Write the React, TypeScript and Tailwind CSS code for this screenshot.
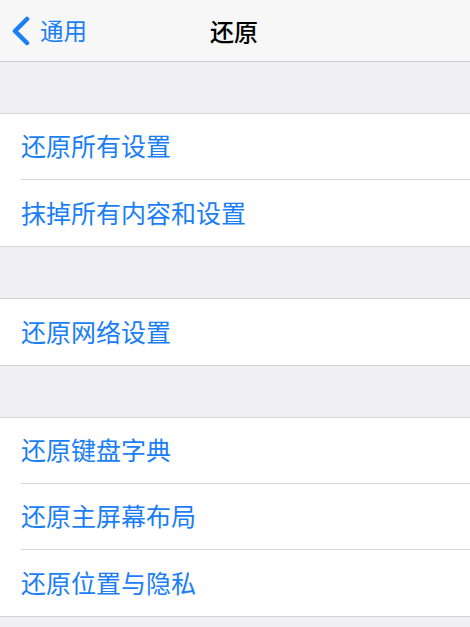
import React from 'react';

const groups: string[][] = [
  ['还原所有设置', '抹掉所有内容和设置'],
  ['还原网络设置'],
  ['还原键盘字典', '还原主屏幕布局', '还原位置与隐私'],
];

const font = { fontFamily: '"Noto Sans CJK SC", "Noto Sans", sans-serif' };

export default function App() {
  return (
    <div className="min-h-[627px] w-[470px] bg-[#efeff4]" style={font}>
      <header className="relative flex h-[62px] items-center border-b border-[#cdcdd1] bg-[#f7f7f8]">
        <button className="flex items-center pl-[9px] text-[#1a7ef5]">
          <svg width="22" height="30" viewBox="0 0 22 30" fill="none">
            <path d="M18 3 L6 15 L18 27" stroke="currentColor" strokeWidth="4.5" strokeLinecap="round" strokeLinejoin="round" />
          </svg>
          <span className="ml-[9px] text-[23.5px] leading-none">通用</span>
        </button>
        <h1 className="absolute left-[210px] text-[24px] font-medium leading-none text-black">还原</h1>
      </header>

      {groups.map((rows, gi) => (
        <section key={gi} className="pt-[51px]">
          <ul className="border-y border-[#d3d3d7] bg-white">
            {rows.map((label, i) => (
              <li key={label} className="pl-[21px]">
                <div
                  className={
                    'flex h-[66px] items-center pb-[1px] text-[25px] text-[#1a7ef5] ' +
                    (i < rows.length - 1 ? 'border-b border-[#d6d6da]' : '')
                  }
                >
                  {label}
                </div>
              </li>
            ))}
          </ul>
        </section>
      ))}
    </div>
  );
}
